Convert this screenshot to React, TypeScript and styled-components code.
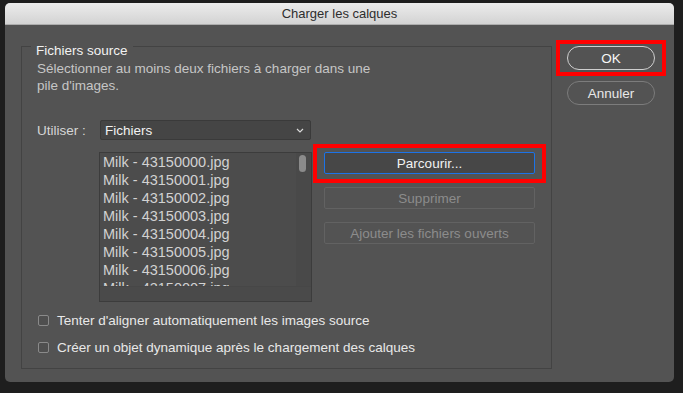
import styled, { createGlobalStyle } from "styled-components";

const GlobalStyle = createGlobalStyle`
  html, body {
    margin: 0;
    padding: 0;
    background: #1e1e1e;
  }
  body {
    font-family: "Liberation Sans", Arial, sans-serif;
    font-size: 13.5px;
  }
`;

const Page = styled.div`
  width: 683px;
  height: 393px;
  padding: 3px 0 0 5px;
  box-sizing: border-box;
`;

const Window = styled.div`
  width: 669px;
  height: 379px;
  border-radius: 5px;
  overflow: hidden;
  background: #535353;
  display: flex;
  flex-direction: column;
`;

const TitleBar = styled.div`
  height: 22px;
  box-sizing: border-box;
  background: linear-gradient(#ececec, #d3d3d3);
  border-bottom: 1px solid #adadad;
  color: #2e2e2e;
  font-size: 13px;
  line-height: 21px;
  text-align: center;
`;

const Body = styled.div`
  flex: 1;
  display: flex;
  gap: 15px;
  padding: 8px 19px 13px 16px;
`;

const Group = styled.fieldset`
  margin: 0;
  padding: 0;
  width: 531px;
  box-sizing: border-box;
  border: 1px solid #434343;
  min-width: 0;
`;

const Legend = styled.legend`
  margin-left: 9px;
  padding: 10px 5px 0;
  line-height: 16px;
  color: #f2f2f2;
`;

const GroupContent = styled.div`
  padding: 0 16px 0 15px;
  display: flex;
  flex-direction: column;
`;

const Description = styled.p`
  margin: 1px 0 0;
  line-height: 17px;
  color: #c6c6c6;
`;

const UseRow = styled.div`
  margin-top: 26px;
  display: flex;
  align-items: center;
`;

const Label = styled.span`
  width: 63px;
  color: #d6d6d6;
`;

const Select = styled.div`
  width: 211px;
  height: 20px;
  box-sizing: border-box;
  background: #454545;
  border: 1px solid #3a3a3a;
  border-radius: 2px;
  display: flex;
  align-items: center;
  justify-content: space-between;
  padding: 0 6px 0 4px;
  color: #f2f2f2;
`;

const FilesRow = styled.div`
  margin-top: 12px;
  display: flex;
  gap: 12px;
  padding-left: 62px;
`;

const List = styled.div`
  width: 213px;
  height: 150px;
  box-sizing: border-box;
  border: 1px solid #3c3c3c;
  background: #4c4c4c;
  display: grid;
  grid-template-columns: 1fr 15px;
  grid-template-rows: 1fr 15px;
`;

const Items = styled.div`
  overflow: hidden;
  padding-left: 3px;
`;

const Item = styled.div`
  font-size: 14.5px;
  line-height: 18px;
  color: #d2d2d2;
  white-space: nowrap;
`;

const VTrack = styled.div`
  background: #494949;
  padding: 2px 0 0 3px;
`;

const Thumb = styled.div`
  width: 7px;
  height: 17px;
  border-radius: 4px;
  background: #8b8b8b;
`;

const HTrack = styled.div`
  grid-column: 1 / span 2;
  background: #4a4a4a;
  border-top: 1px solid #474747;
`;

const Actions = styled.div`
  width: 211px;
  display: flex;
  flex-direction: column;
  gap: 13px;
`;

const Button = styled.div<{ $focused?: boolean; $disabled?: boolean }>`
  height: 22px;
  box-sizing: border-box;
  border: 1px solid
    ${(p) => (p.$focused ? "#1c73e8" : p.$disabled ? "#626262" : "#7a7a7a")};
  border-radius: 2px;
  background: ${(p) => (p.$focused ? "#474747" : "#535353")};
  color: ${(p) => (p.$disabled ? "#8c8c8c" : "#f2f2f2")};
  display: flex;
  align-items: center;
  justify-content: center;
`;

// red annotation frame drawn over the highlighted control
const Highlight = styled.div<{ $top: number; $side: number; $bottom: number }>`
  position: relative;
  &::after {
    content: "";
    position: absolute;
    top: -${(p) => p.$top}px;
    bottom: -${(p) => p.$bottom}px;
    left: -${(p) => p.$side}px;
    right: -${(p) => p.$side}px;
    border: 4px solid #ff0000;
    pointer-events: none;
  }
`;

const Options = styled.div`
  margin-top: 8px;
  display: flex;
  flex-direction: column;
  gap: 7px;
`;

const Option = styled.label`
  height: 20px;
  display: flex;
  align-items: center;
  gap: 8px;
  padding-left: 1px;
  color: #e8e8e8;
`;

const Box = styled.span`
  width: 11px;
  height: 11px;
  box-sizing: border-box;
  border: 1px solid #8a8a8a;
  border-radius: 2px;
  background: #4f4f4f;
`;

const Side = styled.div`
  width: 88px;
  padding-top: 13px;
  display: flex;
  flex-direction: column;
  gap: 11px;
`;

const Pill = styled.div<{ $primary?: boolean }>`
  height: 24px;
  box-sizing: border-box;
  border: 1px solid ${(p) => (p.$primary ? "#cfcfcf" : "#7c7c7c")};
  border-radius: 12px;
  color: ${(p) => (p.$primary ? "#f7f7f7" : "#e8e8e8")};
  display: flex;
  align-items: center;
  justify-content: center;
`;

const files = [0, 1, 2, 3, 4, 5, 6, 7].map(
  (n) => `Milk - 4315000${n}.jpg`
);

function Chevron() {
  return (
    <svg width="8" height="5" viewBox="0 0 8 5">
      <path d="M1 1 L4 4 L7 1" fill="none" stroke="#d8d8d8" strokeWidth="1.2" />
    </svg>
  );
}

export default function App() {
  return (
    <>
      <GlobalStyle />
      <Page>
        <Window>
          <TitleBar>Charger les calques</TitleBar>
          <Body>
            <Group>
              <Legend>Fichiers source</Legend>
              <GroupContent>
                <Description>
                  Sélectionner au moins deux fichiers à charger dans une
                  <br />
                  pile d'images.
                </Description>
                <UseRow>
                  <Label>Utiliser :</Label>
                  <Select>
                    <span>Fichiers</span>
                    <Chevron />
                  </Select>
                </UseRow>
                <FilesRow>
                  <List>
                    <Items>
                      {files.map((f) => (
                        <Item key={f}>{f}</Item>
                      ))}
                    </Items>
                    <VTrack>
                      <Thumb />
                    </VTrack>
                    <HTrack />
                  </List>
                  <Actions>
                    <Highlight $top={8} $side={11} $bottom={9}>
                      <Button $focused>Parcourir...</Button>
                    </Highlight>
                    <Button $disabled>Supprimer</Button>
                    <Button $disabled>Ajouter les fichiers ouverts</Button>
                  </Actions>
                </FilesRow>
                <Options>
                  <Option>
                    <Box />
                    Tenter d'aligner automatiquement les images source
                  </Option>
                  <Option>
                    <Box />
                    Créer un objet dynamique après le chargement des calques
                  </Option>
                </Options>
              </GroupContent>
            </Group>
            <Side>
              <Highlight $top={6} $side={11} $bottom={6}>
                <Pill $primary>OK</Pill>
              </Highlight>
              <Pill>Annuler</Pill>
            </Side>
          </Body>
        </Window>
      </Page>
    </>
  );
}
